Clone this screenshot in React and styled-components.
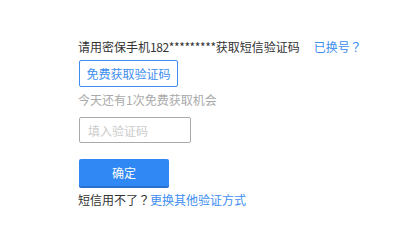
import React from 'react';
import styled, { createGlobalStyle } from 'styled-components';

const Global = createGlobalStyle`
  body {
    margin: 0;
    background: #fff;
    font-family: "Noto Sans CJK SC", "Microsoft YaHei", sans-serif;
    font-size: 12px;
    color: #333;
  }
`;

const Panel = styled.div`
  display: flex;
  flex-direction: column;
  align-items: flex-start;
  padding: 37px 0 0 78px;
`;

const Line = styled.div`
  line-height: 20px;
  white-space: nowrap;
  color: ${({ $muted }) => ($muted ? '#aaa' : '#333')};
  margin-top: ${({ $mt }) => $mt || 0}px;
`;

const Masked = styled.span`
  letter-spacing: -0.4px;
`;

const Link = styled.a`
  color: #3d8ef0;
  text-decoration: none;
  margin-left: ${({ $ml }) => $ml || 0}px;
  cursor: pointer;
`;

/* full-width question mark, centred in its cell like the reference font */
const Punct = styled.span`
  font-family: "Noto Sans CJK TC", "Noto Sans CJK SC", sans-serif;
`;

const OutlineButton = styled.button`
  margin: 3px 0 0 1px;
  width: 99px;
  height: 27px;
  padding: 0;
  border: 1px solid #3d8ef0;
  border-radius: 2px;
  background: #fff;
  color: #3d8ef0;
  font: inherit;
  cursor: pointer;
`;

const CodeInput = styled.input`
  margin: 7px 0 0 1px;
  width: 112px;
  height: 26px;
  box-sizing: border-box;
  padding: 0 8px;
  border: 1px solid #aaa;
  border-radius: 2px;
  font: inherit;
  color: #333;
  outline: none;
  &::placeholder { color: #ccc; }
`;

const SubmitButton = styled.button`
  margin: 16px 0 0 1px;
  width: 90px;
  height: 29px;
  padding: 0;
  border: none;
  border-bottom: 2px solid #2a6fd0;
  border-radius: 2px;
  background: #3088f4;
  color: #fff;
  font: inherit;
  cursor: pointer;
`;

export default function App() {
  return (
    <>
      <Global />
      <Panel>
        <Line>
          请用密保手机<Masked>182*********</Masked>获取短信验证码
          <Link $ml={14}>已换号<Punct>？</Punct></Link>
        </Line>
        <OutlineButton>免费获取验证码</OutlineButton>
        <Line $muted $mt={3}>今天还有1次免费获取机会</Line>
        <CodeInput placeholder="填入验证码" />
        <SubmitButton>确定</SubmitButton>
        <Line $mt={2}>
          短信用不了<Punct>？</Punct><Link>更换其他验证方式</Link>
        </Line>
      </Panel>
    </>
  );
}
